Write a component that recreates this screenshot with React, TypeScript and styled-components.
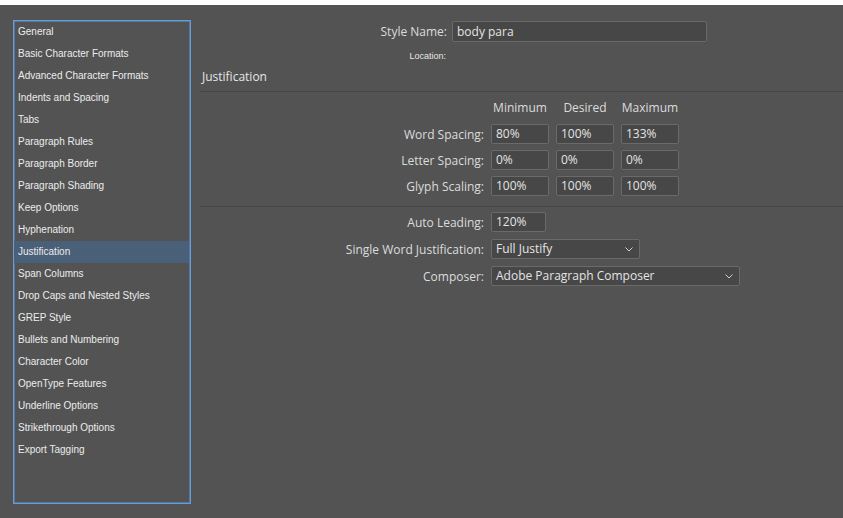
import React from "react";
import styled, { createGlobalStyle } from "styled-components";

const Global = createGlobalStyle`
  html, body { margin: 0; padding: 0; background: #535353; }
  body { width: 843px; height: 518px; overflow: hidden; }
  * { box-sizing: border-box; }
`;

const Page = styled.div`
  width: 843px;
  height: 518px;
  display: flex;
  flex-direction: column;
  background: #535353;
  color: #dedede;
  font-family: "Open Sans", "Noto Sans", sans-serif;
`;

const TopStrip = styled.div`
  height: 5px;
  background: #ffffff;
  flex: none;
`;

const Body = styled.div`
  display: flex;
  padding: 15px 0 0 13px;
  flex: 1;
`;

const List = styled.ul`
  list-style: none;
  margin: 0;
  padding: 0;
  width: 178px;
  height: 484px;
  border: 1px solid #6b9bd0;
  box-shadow: inset 0 0 0 1px #4f79a8;
  flex: none;
`;

const Item = styled.li<{ $active?: boolean }>`
  height: 22px;
  line-height: 22px;
  padding-left: 4px;
  font-family: "Liberation Sans", Arial, sans-serif;
  font-size: 10px;
  color: #ececec;
  white-space: nowrap;
  margin-right: 1px;
  background: ${(p) => (p.$active ? "#4a6079" : "transparent")};
`;

const Panel = styled.div`
  flex: 1;
  display: flex;
  flex-direction: column;
  padding-left: 9px;
`;

const NameRow = styled.div`
  display: grid;
  grid-template-columns: 247px 255px;
  column-gap: 5px;
  align-items: center;
  height: 22px;
`;

const Label = styled.span`
  text-align: right;
  font-size: 12px;
  color: #dcdcdc;
  white-space: nowrap;
`;

const SmallLabel = styled.span`
  text-align: right;
  font-family: "Liberation Sans", Arial, sans-serif;
  font-size: 9px;
  color: #e6e6e6;
  white-space: nowrap;
`;

const LocationRow = styled.div`
  display: grid;
  grid-template-columns: 246px;
  height: 12px;
  line-height: 12px;
  margin-top: 8px;
`;

const Heading = styled.div`
  font-size: 12px;
  color: #e6e6e6;
  padding-left: 2px;
  margin-top: 6px;
  height: 17px;
  line-height: 17px;
`;

const Divider = styled.div<{ $top?: number }>`
  height: 1px;
  background: #474747;
  margin-top: ${(p) => p.$top ?? 0}px;
`;

const FormGrid = styled.div<{ $cols: string; $gap?: number }>`
  display: grid;
  grid-template-columns: ${(p) => p.$cols};
  column-gap: 7px;
  row-gap: ${(p) => p.$gap ?? 6}px;
  align-items: center;
`;

const ColHead = styled.span`
  text-align: center;
  font-size: 12px;
  color: #dcdcdc;
  height: 20px;
  line-height: 20px;
`;

const Field = styled.div<{ $w?: number }>`
  height: 20px;
  width: ${(p) => (p.$w ? `${p.$w}px` : "auto")};
  background: #474747;
  border: 1px solid #6a6a6a;
  border-radius: 2px;
  font-size: 12px;
  color: #e4e4e4;
  padding-left: 4px;
  line-height: 18px;
  white-space: nowrap;
`;

const NameField = styled(Field)`
  height: 21px;
  line-height: 19px;
`;

const Select = styled(Field)`
  display: flex;
  align-items: center;
  justify-content: space-between;
  padding-right: 6px;
`;

const Section1 = styled.div`
  padding-top: 6px;
  padding-bottom: 10px;
`;

const Section2 = styled.div`
  padding-top: 5px;
`;

const Chevron = () => (
  <svg width="8" height="5" viewBox="0 0 8 5">
    <polyline points="0.5,0.5 4,4 7.5,0.5" fill="none" stroke="#d0d0d0" strokeWidth="1" />
  </svg>
);

const items = [
  "General",
  "Basic Character Formats",
  "Advanced Character Formats",
  "Indents and Spacing",
  "Tabs",
  "Paragraph Rules",
  "Paragraph Border",
  "Paragraph Shading",
  "Keep Options",
  "Hyphenation",
  "Justification",
  "Span Columns",
  "Drop Caps and Nested Styles",
  "GREP Style",
  "Bullets and Numbering",
  "Character Color",
  "OpenType Features",
  "Underline Options",
  "Strikethrough Options",
  "Export Tagging",
];

const rows: [string, string, string, string][] = [
  ["Word Spacing:", "80%", "100%", "133%"],
  ["Letter Spacing:", "0%", "0%", "0%"],
  ["Glyph Scaling:", "100%", "100%", "100%"],
];

export default function App() {
  return (
    <Page>
      <Global />
      <TopStrip />
      <Body>
        <List>
          {items.map((t) => (
            <Item key={t} $active={t === "Justification"}>
              {t}
            </Item>
          ))}
        </List>
        <Panel>
          <NameRow>
            <Label>Style Name:</Label>
            <NameField>body para</NameField>
          </NameRow>
          <LocationRow>
            <SmallLabel>Location:</SmallLabel>
          </LocationRow>
          <Heading>Justification</Heading>
          <Divider $top={6} />
          <Section1>
            <FormGrid $cols="284px 58px 58px 58px">
              <span />
              <ColHead>Minimum</ColHead>
              <ColHead>Desired</ColHead>
              <ColHead>Maximum</ColHead>
              {rows.map((r) => (
                <React.Fragment key={r[0]}>
                  <Label>{r[0]}</Label>
                  <Field>{r[1]}</Field>
                  <Field>{r[2]}</Field>
                  <Field>{r[3]}</Field>
                </React.Fragment>
              ))}
            </FormGrid>
          </Section1>
          <Divider />
          <Section2>
            <FormGrid $cols="284px auto" $gap={7}>
              <Label>Auto Leading:</Label>
              <Field $w={55}>120%</Field>
              <Label>Single Word Justification:</Label>
              <Select $w={149}>
                <span>Full Justify</span>
                <Chevron />
              </Select>
              <Label>Composer:</Label>
              <Select $w={249}>
                <span>Adobe Paragraph Composer</span>
                <Chevron />
              </Select>
            </FormGrid>
          </Section2>
        </Panel>
      </Body>
    </Page>
  );
}
